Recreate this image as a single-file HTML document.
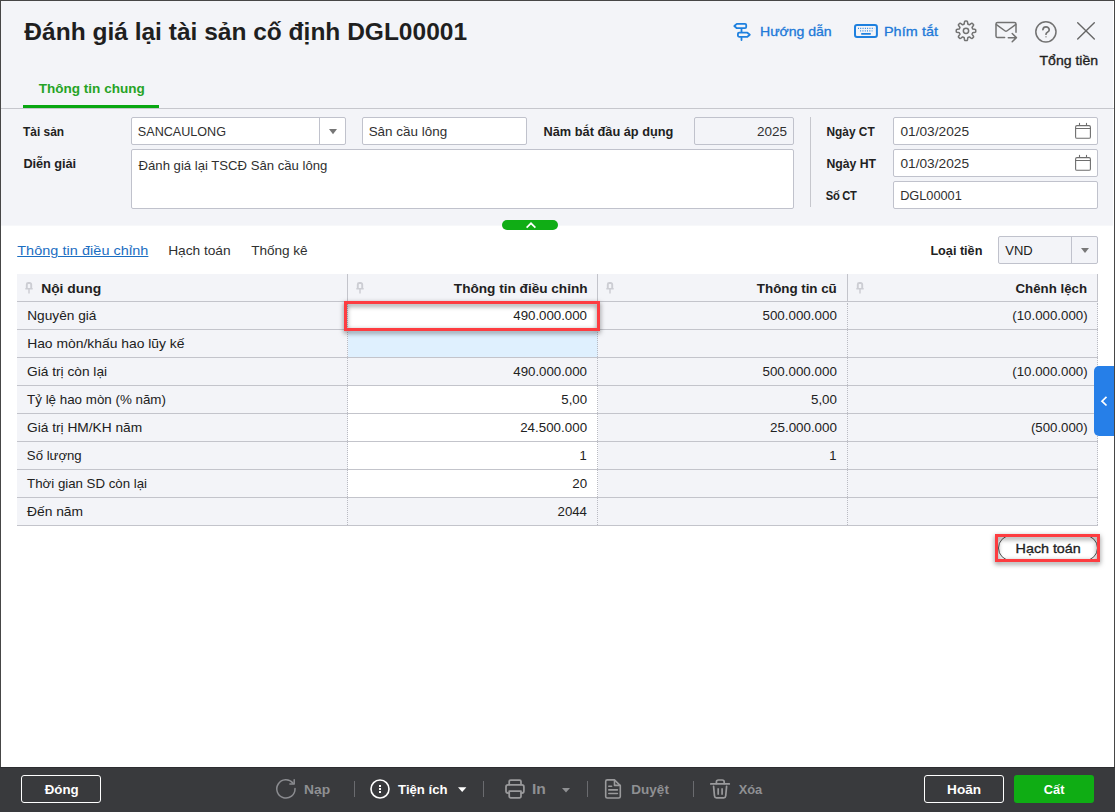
<!DOCTYPE html>
<html><head><meta charset="utf-8"><title>Đánh giá lại tài sản cố định</title>
<style>
*{box-sizing:border-box;margin:0;padding:0}
html,body{width:1115px;height:812px;overflow:hidden}
body{position:relative;background:#fff;font-family:"Liberation Sans",sans-serif;}
.t{position:absolute;transform-origin:0 50%;white-space:nowrap;line-height:1;font-family:"Liberation Sans",sans-serif;}
.a{position:absolute}
.inp{position:absolute;background:#fff;border:1px solid #c0c2cc;border-radius:2px}
.hl{position:absolute;height:1px;background:#c3c4cb;left:17px;width:1081px}
.vd{position:absolute;width:0;border-left:1px dotted #b9bac2}
svg{position:absolute;overflow:visible}
.red{border:3px solid #fd3c40;filter:drop-shadow(0 2.5px 2.5px rgba(0,0,0,.5))}

</style></head>
<body>
<!-- window frame -->
<div class="a" style="left:0;top:0;width:1115px;height:812px;background:#fff"></div>
<!-- gray header/form area -->
<div class="a" style="left:1px;top:1px;width:1112px;height:224px;background:#f3f4f8"></div>
<div class="a" style="left:1px;top:225px;width:1112px;height:1px;background:#f7f8fa"></div>
<div class="a" style="left:0;top:0;width:1115px;height:1px;background:#464646"></div>
<div class="a" style="left:0;top:0;width:1px;height:812px;background:#464646"></div>
<div class="a" style="left:1114px;top:0;width:1px;height:812px;background:#464646"></div>
<!-- tab underline + separator -->
<div class="a" style="left:1px;top:108px;width:1113px;height:1px;background:#c6c7cd"></div>
<div class="a" style="left:23px;top:105px;width:136px;height:3px;background:#09a712"></div>
<!-- form inputs -->
<div class="inp" style="left:131px;top:117px;width:215px;height:28px"></div>
<div class="a" style="left:319px;top:118px;width:1px;height:26px;background:#c0c2cc"></div>
<div class="inp" style="left:362px;top:117px;width:165px;height:28px"></div>
<div class="inp" style="left:694px;top:117px;width:100px;height:28px;background:#f3f4f8"></div>
<div class="inp" style="left:131px;top:149px;width:663px;height:60px"></div>
<div class="a" style="left:810px;top:117px;width:1px;height:90px;background:#c6c7cd"></div>
<div class="inp" style="left:893px;top:117px;width:205px;height:28px"></div>
<div class="inp" style="left:893px;top:149px;width:205px;height:28px"></div>
<div class="inp" style="left:893px;top:181px;width:205px;height:28px"></div>
<!-- green collapse pill -->
<div class="a" style="left:502px;top:220px;width:56px;height:10px;border-radius:5px;background:#10ad15"></div>
<!-- currency select -->
<div class="inp" style="left:998px;top:236px;width:100px;height:28px;background:#f3f4f8"></div>
<div class="a" style="left:1071px;top:237px;width:1px;height:26px;background:#c0c2cc"></div>
<!-- table -->
<div class="a" style="left:17px;top:274px;width:1081px;height:252px;background:#f3f4f8"></div>
<div class="a" style="left:348px;top:329px;width:250px;height:28px;background:#dff0fe"></div>
<div class="a" style="left:348px;top:301px;width:250px;height:28px;background:#fff"></div>
<div class="a" style="left:348px;top:385px;width:250px;height:112px;background:#fff"></div>
<div class="hl" style="top:301px"></div><div class="hl" style="top:329px"></div><div class="hl" style="top:357px"></div><div class="hl" style="top:385px"></div><div class="hl" style="top:413px"></div><div class="hl" style="top:441px"></div><div class="hl" style="top:469px"></div><div class="hl" style="top:497px"></div><div class="hl" style="top:525px"></div>
<div class="a" style="left:347px;top:274px;width:1px;height:27px;background:#c3c4cb"></div>
<div class="a" style="left:597px;top:274px;width:1px;height:27px;background:#c3c4cb"></div>
<div class="a" style="left:847px;top:274px;width:1px;height:27px;background:#c3c4cb"></div>
<div class="a" style="left:1097px;top:274px;width:1px;height:27px;background:#c3c4cb"></div>
<div class="vd" style="left:347px;top:303px;height:222px"></div>
<div class="vd" style="left:597px;top:303px;height:222px"></div>
<div class="vd" style="left:847px;top:303px;height:222px"></div>
<div class="vd" style="left:1097px;top:303px;height:222px"></div>
<!-- Hach toan pill button -->
<div class="a" style="left:998px;top:535px;width:100px;height:26px;border:1px solid #555;border-radius:13px;background:#fff"></div>
<!-- red highlight boxes -->
<div class="a red" style="left:344px;top:301px;width:256px;height:30px"></div>
<div class="a red" style="left:995px;top:534px;width:105px;height:28px"></div>
<!-- right blue tab -->
<div class="a" style="left:1094px;top:366px;width:20px;height:70px;background:#267fe8;border-radius:5px 0 0 5px"></div>
<!-- bottom bar -->
<div class="a" style="left:0;top:767px;width:1115px;height:45px;background:#393a3d"></div>
<div class="a" style="left:0;top:767px;width:1115px;height:1px;background:#2c2d30"></div>
<div class="a" style="left:21px;top:775px;width:80px;height:28px;border:1px solid #fff;border-radius:3px"></div>
<div class="a" style="left:924px;top:775px;width:80px;height:28px;border:1px solid #fff;border-radius:3px"></div>
<div class="a" style="left:1014px;top:775px;width:80px;height:28px;background:#0fad14;border-radius:3px"></div>
<div class="a" style="left:354px;top:781px;width:1px;height:16px;background:#6a6b6f"></div>
<div class="a" style="left:483px;top:781px;width:1px;height:16px;background:#6a6b6f"></div>
<div class="a" style="left:586.5px;top:781px;width:1px;height:16px;background:#6a6b6f"></div>
<div class="a" style="left:692.5px;top:781px;width:1px;height:16px;background:#6a6b6f"></div>
<svg style="left:329px;top:129px" width="8" height="5" viewBox="0 0 8 5"><path d="M0 0h8L4 5.2z" fill="#767676"/></svg>
<svg style="left:1081px;top:248px" width="8" height="5" viewBox="0 0 8 5"><path d="M0 0h8L4 5z" fill="#787878"/></svg>
<svg style="left:0;top:0" width="1115" height="812" viewBox="0 0 1115 812" fill="none" stroke-linecap="round" stroke-linejoin="round">
<g stroke="#1e80df" stroke-width="1.8">
<path d="M736.8 23.9H745a1.2 1.2 0 0 1 1.2 1.2V27a1.2 1.2 0 0 1-1.2 1.2H736.8L734.3 26.05Z"/>
<path d="M739.1 32.7H747.4L749.8 34.75L747.4 36.8H739.1a1.2 1.2 0 0 1-1.2-1.2V33.9a1.2 1.2 0 0 1 1.2-1.2Z"/>
<path d="M741.5 29V32M741.5 37.5V40.1"/>
</g>
<g stroke="#1e80df">
<rect x="855" y="24.9" width="21.9" height="12.1" rx="2" stroke-width="2"/>
<path d="M858 28.3H874.2" stroke-width="1.3" stroke-dasharray="0.9 1.4" stroke-linecap="butt"/>
<path d="M860.2 30.9H872.4" stroke-width="1.3" stroke-dasharray="0.9 1.4" stroke-linecap="butt"/>
<path d="M861.8 33.9H870.2" stroke-width="1.6"/>
</g>
<g stroke="#727272" stroke-width="1.5">
<path d="M975.75 30.85 L975.75 31.02 L975.74 31.19 L975.74 31.36 L975.73 31.53 L975.71 31.70 L975.68 31.87 L975.57 32.03 L975.37 32.17 L975.08 32.29 L974.70 32.38 L974.28 32.46 L973.84 32.52 L973.43 32.57 L973.09 32.62 L972.84 32.68 L972.68 32.77 L972.60 32.87 L972.56 32.98 L972.52 33.10 L972.48 33.21 L972.44 33.32 L972.40 33.43 L972.35 33.55 L972.30 33.66 L972.25 33.77 L972.20 33.87 L972.15 33.98 L972.09 34.09 L972.08 34.22 L972.13 34.39 L972.26 34.61 L972.47 34.89 L972.72 35.21 L972.99 35.56 L973.24 35.92 L973.44 36.25 L973.56 36.55 L973.60 36.79 L973.56 36.98 L973.47 37.12 L973.36 37.25 L973.25 37.37 L973.13 37.50 L973.01 37.62 L972.89 37.74 L972.77 37.86 L972.65 37.98 L972.52 38.10 L972.40 38.21 L972.27 38.32 L972.13 38.41 L971.94 38.45 L971.70 38.41 L971.40 38.29 L971.07 38.09 L970.71 37.84 L970.36 37.57 L970.04 37.32 L969.76 37.11 L969.54 36.98 L969.37 36.93 L969.24 36.94 L969.13 37.00 L969.02 37.05 L968.92 37.10 L968.81 37.15 L968.70 37.20 L968.58 37.25 L968.47 37.29 L968.36 37.33 L968.25 37.37 L968.13 37.41 L968.02 37.45 L967.92 37.53 L967.83 37.69 L967.77 37.94 L967.72 38.28 L967.67 38.69 L967.61 39.13 L967.53 39.55 L967.44 39.93 L967.32 40.22 L967.18 40.42 L967.02 40.53 L966.85 40.56 L966.68 40.58 L966.51 40.59 L966.34 40.59 L966.17 40.60 L966.00 40.60 L965.83 40.60 L965.66 40.59 L965.49 40.59 L965.32 40.58 L965.15 40.56 L964.98 40.53 L964.82 40.42 L964.68 40.22 L964.56 39.93 L964.47 39.55 L964.39 39.13 L964.33 38.69 L964.28 38.28 L964.23 37.94 L964.17 37.69 L964.08 37.53 L963.98 37.45 L963.87 37.41 L963.75 37.37 L963.64 37.33 L963.53 37.29 L963.42 37.25 L963.30 37.20 L963.19 37.15 L963.08 37.10 L962.98 37.05 L962.87 37.00 L962.76 36.94 L962.63 36.93 L962.46 36.98 L962.24 37.11 L961.96 37.32 L961.64 37.57 L961.29 37.84 L960.93 38.09 L960.60 38.29 L960.30 38.41 L960.06 38.45 L959.87 38.41 L959.73 38.32 L959.60 38.21 L959.48 38.10 L959.35 37.98 L959.23 37.86 L959.11 37.74 L958.99 37.62 L958.87 37.50 L958.75 37.37 L958.64 37.25 L958.53 37.12 L958.44 36.98 L958.40 36.79 L958.44 36.55 L958.56 36.25 L958.76 35.92 L959.01 35.56 L959.28 35.21 L959.53 34.89 L959.74 34.61 L959.87 34.39 L959.92 34.22 L959.91 34.09 L959.85 33.98 L959.80 33.87 L959.75 33.77 L959.70 33.66 L959.65 33.55 L959.60 33.43 L959.56 33.32 L959.52 33.21 L959.48 33.10 L959.44 32.98 L959.40 32.87 L959.32 32.77 L959.16 32.68 L958.91 32.62 L958.57 32.57 L958.16 32.52 L957.72 32.46 L957.30 32.38 L956.92 32.29 L956.63 32.17 L956.43 32.03 L956.32 31.87 L956.29 31.70 L956.27 31.53 L956.26 31.36 L956.26 31.19 L956.25 31.02 L956.25 30.85 L956.25 30.68 L956.26 30.51 L956.26 30.34 L956.27 30.17 L956.29 30.00 L956.32 29.83 L956.43 29.67 L956.63 29.53 L956.92 29.41 L957.30 29.32 L957.72 29.24 L958.16 29.18 L958.57 29.13 L958.91 29.08 L959.16 29.02 L959.32 28.93 L959.40 28.83 L959.44 28.72 L959.48 28.60 L959.52 28.49 L959.56 28.38 L959.60 28.27 L959.65 28.15 L959.70 28.04 L959.75 27.93 L959.80 27.83 L959.85 27.72 L959.91 27.61 L959.92 27.48 L959.87 27.31 L959.74 27.09 L959.53 26.81 L959.28 26.49 L959.01 26.14 L958.76 25.78 L958.56 25.45 L958.44 25.15 L958.40 24.91 L958.44 24.72 L958.53 24.58 L958.64 24.45 L958.75 24.33 L958.87 24.20 L958.99 24.08 L959.11 23.96 L959.23 23.84 L959.35 23.72 L959.48 23.60 L959.60 23.49 L959.73 23.38 L959.87 23.29 L960.06 23.25 L960.30 23.29 L960.60 23.41 L960.93 23.61 L961.29 23.86 L961.64 24.13 L961.96 24.38 L962.24 24.59 L962.46 24.72 L962.63 24.77 L962.76 24.76 L962.87 24.70 L962.98 24.65 L963.08 24.60 L963.19 24.55 L963.30 24.50 L963.42 24.45 L963.53 24.41 L963.64 24.37 L963.75 24.33 L963.87 24.29 L963.98 24.25 L964.08 24.17 L964.17 24.01 L964.23 23.76 L964.28 23.42 L964.33 23.01 L964.39 22.57 L964.47 22.15 L964.56 21.77 L964.68 21.48 L964.82 21.28 L964.98 21.17 L965.15 21.14 L965.32 21.12 L965.49 21.11 L965.66 21.11 L965.83 21.10 L966.00 21.10 L966.17 21.10 L966.34 21.11 L966.51 21.11 L966.68 21.12 L966.85 21.14 L967.02 21.17 L967.18 21.28 L967.32 21.48 L967.44 21.77 L967.53 22.15 L967.61 22.57 L967.67 23.01 L967.72 23.42 L967.77 23.76 L967.83 24.01 L967.92 24.17 L968.02 24.25 L968.13 24.29 L968.25 24.33 L968.36 24.37 L968.47 24.41 L968.58 24.45 L968.70 24.50 L968.81 24.55 L968.92 24.60 L969.02 24.65 L969.13 24.70 L969.24 24.76 L969.37 24.77 L969.54 24.72 L969.76 24.59 L970.04 24.38 L970.36 24.13 L970.71 23.86 L971.07 23.61 L971.40 23.41 L971.70 23.29 L971.94 23.25 L972.13 23.29 L972.27 23.38 L972.40 23.49 L972.52 23.60 L972.65 23.72 L972.77 23.84 L972.89 23.96 L973.01 24.08 L973.13 24.20 L973.25 24.33 L973.36 24.45 L973.47 24.58 L973.56 24.72 L973.60 24.91 L973.56 25.15 L973.44 25.45 L973.24 25.78 L972.99 26.14 L972.72 26.49 L972.47 26.81 L972.26 27.09 L972.13 27.31 L972.08 27.48 L972.09 27.61 L972.15 27.72 L972.20 27.83 L972.25 27.93 L972.30 28.04 L972.35 28.15 L972.40 28.27 L972.44 28.38 L972.48 28.49 L972.52 28.60 L972.56 28.72 L972.60 28.83 L972.68 28.93 L972.84 29.02 L973.09 29.08 L973.43 29.13 L973.84 29.18 L974.28 29.24 L974.70 29.32 L975.08 29.41 L975.37 29.53 L975.57 29.67 L975.68 29.83 L975.71 30.00 L975.73 30.17 L975.74 30.34 L975.74 30.51 L975.75 30.68Z"/>
<circle cx="966" cy="30.85" r="2.65"/>
</g>
<g stroke="#727272" stroke-width="1.5">
<path d="M1004.6 37.55H997.6a1.6 1.6 0 0 1-1.6-1.6V24.1a1.6 1.6 0 0 1 1.6-1.6H1014.4a1.6 1.6 0 0 1 1.6 1.6V32.2"/>
<path d="M996.4 24.6L1005.2 31a1.4 1.4 0 0 0 1.6 0L1015.6 24.6"/>
<path d="M1008.3 37.65H1016.3M1012.2 33.5L1016.4 37.65L1012.2 41.8"/>
</g>
<g stroke="#727272" stroke-width="1.5">
<circle cx="1045.9" cy="31.8" r="10.1"/>
<path d="M1042.9 29.6a3.1 3.1 0 0 1 3.1-2.7a3.1 3.1 0 0 1 3.2 3c0 2.2-3.2 2.3-3.2 4.3" stroke-width="1.7"/>
<path d="M1046 36.5V37.3" stroke-width="1.7" stroke-linecap="butt"/>
</g>
<path d="M1077.7 22.8L1094.3 39M1094.3 22.8L1077.7 39" stroke="#666" stroke-width="1.4"/>
<g stroke="#6e6e6e" stroke-width="1.1"><rect x="1075.6" y="125.6" width="14.8" height="12.7" rx="1.4"/><path d="M1075.6 128.5H1090.4M1079.5 123.3V125.5M1086.5 123.3V125.5"/></g>
<g stroke="#6e6e6e" stroke-width="1.1"><rect x="1075.6" y="157.6" width="14.8" height="12.7" rx="1.4"/><path d="M1075.6 160.5H1090.4M1079.5 155.3V157.5M1086.5 155.3V157.5"/></g>
<g transform="translate(24.85 0)" stroke="#cccdd3" stroke-linecap="butt"><path d="M1.95 288.6V284.5a1.5 1.5 0 0 1 1.5-1.5h1.4a1.5 1.5 0 0 1 1.5 1.5V288.6" stroke-width="1.9"/><path d="M0.5 288.7H7.8M4.15 289V293.6" stroke-width="1.45"/></g>
<g transform="translate(355.85 0)" stroke="#cccdd3" stroke-linecap="butt"><path d="M1.95 288.6V284.5a1.5 1.5 0 0 1 1.5-1.5h1.4a1.5 1.5 0 0 1 1.5 1.5V288.6" stroke-width="1.9"/><path d="M0.5 288.7H7.8M4.15 289V293.6" stroke-width="1.45"/></g>
<g transform="translate(605.85 0)" stroke="#cccdd3" stroke-linecap="butt"><path d="M1.95 288.6V284.5a1.5 1.5 0 0 1 1.5-1.5h1.4a1.5 1.5 0 0 1 1.5 1.5V288.6" stroke-width="1.9"/><path d="M0.5 288.7H7.8M4.15 289V293.6" stroke-width="1.45"/></g>
<g transform="translate(855.85 0)" stroke="#cccdd3" stroke-linecap="butt"><path d="M1.95 288.6V284.5a1.5 1.5 0 0 1 1.5-1.5h1.4a1.5 1.5 0 0 1 1.5 1.5V288.6" stroke-width="1.9"/><path d="M0.5 288.7H7.8M4.15 289V293.6" stroke-width="1.45"/></g>
<g stroke="#8b8c90" stroke-width="1.5"><path d="M295 788.6A9.1 9.1 0 1 1 292.9 783.1"/><path d="M294.2 779.7V784H289.9"/></g>
<circle cx="380" cy="789" r="9" stroke="#fff" stroke-width="1.6"/>
<path d="M379 785h2v2h-2zM379 788h2v2h-2zM379 791h2v2h-2z" fill="#fff" stroke="none"/>
<path d="M458 787.2h8.4l-4.2 4.8z" fill="#fff" stroke="none"/>
<path d="M562 788h8l-4 4.5z" fill="#8f9093" stroke="none"/>
<g stroke="#9a9a9c" stroke-width="1.75">
<path d="M509.2 784.5V781.5a1.5 1.5 0 0 1 1.5-1.5H519.5a1.5 1.5 0 0 1 1.5 1.5V784.5"/>
<path d="M509 793H508a2 2 0 0 1-2-2V786.9a2 2 0 0 1 2-2H521.9a2 2 0 0 1 2 2V791a2 2 0 0 1-2 2H521.2"/>
<path d="M509.2 791.2H521V796.3a1.5 1.5 0 0 1-1.5 1.5H510.7a1.5 1.5 0 0 1-1.5-1.5Z"/>
</g>
<g stroke="#9a9a9c" stroke-width="1.6">
<path d="M607.3 779.9H614.4L620.3 785.6V796.4a1.6 1.6 0 0 1-1.6 1.6H607.3a1.6 1.6 0 0 1-1.6-1.6V781.5a1.6 1.6 0 0 1 1.6-1.6Z"/>
<path d="M614.5 780.2V785.4H620"/>
<path d="M608.8 786.2H611.6M608.8 789.9H617.4M608.8 793.5H617.4"/>
</g>
<g stroke="#9a9a9c" stroke-width="1.7">
<path d="M710.8 783.9H729.3"/>
<path d="M716.4 783.5V782a2 2 0 0 1 2-2H722.2a2 2 0 0 1 2 2V783.5"/>
<path d="M713.6 786.3L714.5 796a2 2 0 0 0 2 1.8H723.7a2 2 0 0 0 2-1.8L726.6 786.3"/>
<path d="M718.2 788.2V794.8M722.1 788.2V794.8" stroke-linecap="butt"/>
</g>
<path d="M526.6 227.6L531 223.3L535.4 227.6" stroke="#fff" stroke-width="1.7" stroke-linecap="butt" stroke-linejoin="miter"/>
<path d="M1106.5 396.9L1102 401.2L1106.5 405.5" stroke="#fff" stroke-width="1.7" stroke-linecap="butt" stroke-linejoin="miter"/>
</svg>
<span class="t" id="t0" style="left:24.37px;top:21.00px;font-size:23.6px;font-weight:700;color:#1f1f1f;letter-spacing:-0.001px;left:0;transform:translateX(24.37px) scaleX(1.0389);">Đánh giá lại tài sản cố định DGL00001</span>
<span class="t" id="t1" style="left:760.01px;top:25.00px;font-size:13px;font-weight:400;color:#2179d8;letter-spacing:-0.030px;-webkit-text-stroke:0.3px #2179d8;left:0;transform:translateX(760.01px) scaleX(1.0839);">Hướng dẫn</span>
<span class="t" id="t2" style="left:883.89px;top:25.00px;font-size:13px;font-weight:400;color:#2179d8;letter-spacing:0.074px;-webkit-text-stroke:0.3px #2179d8;left:0;transform:translateX(883.89px) scaleX(1.1071);">Phím tắt</span>
<span class="t" id="t3" style="left:1039.53px;top:54.00px;font-size:13px;font-weight:400;color:#1f1f1f;letter-spacing:0.003px;-webkit-text-stroke:0.33px #1f1f1f;left:0;transform:translateX(1039.53px) scaleX(1.0797);">Tổng tiền</span>
<span class="t" id="t4" style="left:38.64px;top:82.00px;font-size:13px;font-weight:700;color:#25a325;letter-spacing:0.010px;left:0;transform:translateX(38.64px) scaleX(1.0411);">Thông tin chung</span>
<span class="t" id="t5" style="left:23.10px;top:126.00px;font-size:12px;font-weight:700;color:#212121;letter-spacing:0.000px;left:0;transform:translateX(23.10px) scaleX(0.9915);">Tài sản</span>
<span class="t" id="t6" style="left:23.38px;top:158.00px;font-size:12px;font-weight:700;color:#212121;letter-spacing:-0.053px;left:0;transform:translateX(23.38px) scaleX(1.0601);">Diễn giải</span>
<span class="t" id="t7" style="left:137.83px;top:125.00px;font-size:13px;font-weight:400;color:#303030;letter-spacing:0.000px;left:0;transform:translateX(137.83px) scaleX(0.9686);">SANCAULONG</span>
<span class="t" id="t8" style="left:138.58px;top:159.00px;font-size:13px;font-weight:400;color:#303030;letter-spacing:0.004px;left:0;transform:translateX(138.58px) scaleX(1.0093);">Đánh giá lại TSCĐ Sân cầu lông</span>
<span class="t" id="t9" style="left:368.65px;top:125.00px;font-size:13px;font-weight:400;color:#303030;letter-spacing:0.010px;left:0;transform:translateX(368.65px) scaleX(1.0327);">Sân cầu lông</span>
<span class="t" id="t10" style="left:543.55px;top:126.00px;font-size:12px;font-weight:700;color:#212121;letter-spacing:0.013px;left:0;transform:translateX(543.55px) scaleX(1.0622);">Năm bắt đầu áp dụng</span>
<span class="t" id="t11" style="left:757.09px;top:125.00px;font-size:13px;font-weight:400;color:#303030;letter-spacing:-0.013px;left:0;transform:translateX(757.09px) scaleX(1.0381);">2025</span>
<span class="t" id="t12" style="left:826.52px;top:126.00px;font-size:12px;font-weight:700;color:#212121;letter-spacing:-0.012px;left:0;transform:translateX(826.52px) scaleX(0.9903);">Ngày CT</span>
<span class="t" id="t13" style="left:826.49px;top:158.00px;font-size:12px;font-weight:700;color:#212121;letter-spacing:-0.020px;left:0;transform:translateX(826.49px) scaleX(1.0196);">Ngày HT</span>
<span class="t" id="t14" style="left:825.72px;top:190.00px;font-size:12px;font-weight:700;color:#212121;letter-spacing:-0.280px;left:0;transform:translateX(825.72px) scaleX(0.9300);">Số CT</span>
<span class="t" id="t15" style="left:900.39px;top:125.00px;font-size:13px;font-weight:400;color:#303030;letter-spacing:0.013px;left:0;transform:translateX(900.39px) scaleX(1.0526);">01/03/2025</span>
<span class="t" id="t16" style="left:900.39px;top:157.00px;font-size:13px;font-weight:400;color:#303030;letter-spacing:0.013px;left:0;transform:translateX(900.39px) scaleX(1.0526);">01/03/2025</span>
<span class="t" id="t17" style="left:900.13px;top:189.00px;font-size:13px;font-weight:400;color:#303030;letter-spacing:-0.017px;left:0;transform:translateX(900.13px) scaleX(0.9826);">DGL00001</span>
<span class="t" id="t18" style="left:17.22px;top:245.00px;font-size:12.9px;font-weight:400;color:#1b6ec2;letter-spacing:0.050px;text-decoration:underline;text-underline-offset:1px;text-decoration-thickness:1px;left:0;transform:translateX(17.22px) scaleX(1.1200);">Thông tin điều chỉnh</span>
<span class="t" id="t19" style="left:168.14px;top:245.00px;font-size:12.9px;font-weight:400;color:#303030;letter-spacing:-0.029px;left:0;transform:translateX(168.14px) scaleX(1.0674);">Hạch toán</span>
<span class="t" id="t20" style="left:251.13px;top:245.00px;font-size:12.9px;font-weight:400;color:#303030;letter-spacing:-0.029px;left:0;transform:translateX(251.13px) scaleX(1.0556);">Thống kê</span>
<span class="t" id="t21" style="left:930.39px;top:245.00px;font-size:12px;font-weight:700;color:#212121;letter-spacing:-0.020px;left:0;transform:translateX(930.39px) scaleX(1.0571);">Loại tiền</span>
<span class="t" id="t22" style="left:1005.18px;top:244.00px;font-size:13px;font-weight:400;color:#212121;letter-spacing:0.039px;">VND</span>
<span class="t" id="t23" style="left:41.13px;top:282.00px;font-size:13px;font-weight:700;color:#212121;letter-spacing:-0.007px;left:0;transform:translateX(41.13px) scaleX(1.0668);">Nội dung</span>
<span class="t" id="t24" style="left:453.87px;top:282.00px;font-size:13px;font-weight:700;color:#212121;letter-spacing:-0.007px;left:0;transform:translateX(453.87px) scaleX(1.0472);">Thông tin điều chỉnh</span>
<span class="t" id="t25" style="left:756.87px;top:282.00px;font-size:13px;font-weight:700;color:#212121;letter-spacing:-0.035px;left:0;transform:translateX(756.87px) scaleX(1.0289);">Thông tin cũ</span>
<span class="t" id="t26" style="left:1015.50px;top:282.00px;font-size:13px;font-weight:700;color:#212121;letter-spacing:0.032px;left:0;transform:translateX(1015.50px) scaleX(1.0172);">Chênh lệch</span>
<span class="t" id="t27" style="left:27.13px;top:309.00px;font-size:13px;font-weight:400;color:#212121;letter-spacing:0.013px;left:0;transform:translateX(27.13px) scaleX(1.0525);">Nguyên giá</span>
<span class="t" id="t28" style="left:27.13px;top:337.00px;font-size:13px;font-weight:400;color:#212121;letter-spacing:-0.002px;left:0;transform:translateX(27.13px) scaleX(1.0677);">Hao mòn/khấu hao lũy kế</span>
<span class="t" id="t29" style="left:27.05px;top:365.00px;font-size:13px;font-weight:400;color:#212121;letter-spacing:-0.002px;left:0;transform:translateX(27.05px) scaleX(1.0551);">Giá trị còn lại</span>
<span class="t" id="t30" style="left:27.11px;top:393.00px;font-size:13px;font-weight:400;color:#212121;letter-spacing:-0.005px;left:0;transform:translateX(27.11px) scaleX(1.0282);">Tỷ lệ hao mòn (% năm)</span>
<span class="t" id="t31" style="left:27.05px;top:421.00px;font-size:13px;font-weight:400;color:#212121;letter-spacing:-0.005px;left:0;transform:translateX(27.05px) scaleX(1.0563);">Giá trị HM/KH năm</span>
<span class="t" id="t32" style="left:26.85px;top:449.00px;font-size:13px;font-weight:400;color:#212121;letter-spacing:0.002px;left:0;transform:translateX(26.85px) scaleX(1.0135);">Số lượng</span>
<span class="t" id="t33" style="left:27.11px;top:477.00px;font-size:13px;font-weight:400;color:#212121;letter-spacing:-0.006px;left:0;transform:translateX(27.11px) scaleX(1.0202);">Thời gian SD còn lại</span>
<span class="t" id="t34" style="left:26.98px;top:505.00px;font-size:13px;font-weight:400;color:#212121;letter-spacing:-0.012px;left:0;transform:translateX(26.98px) scaleX(1.0635);">Đến năm</span>
<span class="t" id="t35" style="left:513.27px;top:309.00px;font-size:13px;font-weight:400;color:#212121;letter-spacing:-0.038px;left:0;transform:translateX(513.27px) scaleX(1.0248);">490.000.000</span>
<span class="t" id="t36" style="left:513.27px;top:365.00px;font-size:13px;font-weight:400;color:#212121;letter-spacing:-0.038px;left:0;transform:translateX(513.27px) scaleX(1.0248);">490.000.000</span>
<span class="t" id="t37" style="left:561.24px;top:393.00px;font-size:13px;font-weight:400;color:#212121;letter-spacing:0.040px;left:0;transform:translateX(561.24px) scaleX(1.0185);">5,00</span>
<span class="t" id="t38" style="left:520.17px;top:421.00px;font-size:13px;font-weight:400;color:#212121;letter-spacing:0.027px;left:0;transform:translateX(520.17px) scaleX(1.0238);">24.500.000</span>
<span class="t" id="t39" style="left:579.46px;top:449.00px;font-size:13px;font-weight:400;color:#212121;letter-spacing:0.000px;">1</span>
<span class="t" id="t40" style="left:572.15px;top:477.00px;font-size:13px;font-weight:400;color:#212121;letter-spacing:0.130px;left:0;transform:translateX(572.15px) scaleX(1.0257);">20</span>
<span class="t" id="t41" style="left:557.61px;top:505.00px;font-size:13px;font-weight:400;color:#212121;letter-spacing:-0.047px;left:0;transform:translateX(557.61px) scaleX(1.0194);">2044</span>
<span class="t" id="t42" style="left:762.45px;top:309.00px;font-size:13px;font-weight:400;color:#212121;letter-spacing:-0.000px;left:0;transform:translateX(762.45px) scaleX(1.0290);">500.000.000</span>
<span class="t" id="t43" style="left:762.45px;top:365.00px;font-size:13px;font-weight:400;color:#212121;letter-spacing:-0.000px;left:0;transform:translateX(762.45px) scaleX(1.0290);">500.000.000</span>
<span class="t" id="t44" style="left:811.05px;top:393.00px;font-size:13px;font-weight:400;color:#212121;letter-spacing:-0.048px;left:0;transform:translateX(811.05px) scaleX(1.0263);">5,00</span>
<span class="t" id="t45" style="left:770.11px;top:421.00px;font-size:13px;font-weight:400;color:#212121;letter-spacing:-0.035px;left:0;transform:translateX(770.11px) scaleX(1.0320);">25.000.000</span>
<span class="t" id="t46" style="left:829.27px;top:449.00px;font-size:13px;font-weight:400;color:#212121;letter-spacing:0.000px;">1</span>
<span class="t" id="t47" style="left:1012.29px;top:309.00px;font-size:13px;font-weight:400;color:#212121;letter-spacing:0.009px;left:0;transform:translateX(1012.29px) scaleX(1.0205);">(10.000.000)</span>
<span class="t" id="t48" style="left:1012.29px;top:365.00px;font-size:13px;font-weight:400;color:#212121;letter-spacing:0.009px;left:0;transform:translateX(1012.29px) scaleX(1.0205);">(10.000.000)</span>
<span class="t" id="t49" style="left:1030.92px;top:421.00px;font-size:13px;font-weight:400;color:#212121;letter-spacing:-0.001px;left:0;transform:translateX(1030.92px) scaleX(1.0181);">(500.000)</span>
<span class="t" id="t50" style="left:1015.60px;top:542.00px;font-size:13.2px;font-weight:400;color:#1f1f1f;letter-spacing:-0.038px;-webkit-text-stroke:0.33px #1f1f1f;left:0;transform:translateX(1015.60px) scaleX(1.0893);">Hạch toán</span>
<span class="t" id="t51" style="left:44.70px;top:783.00px;font-size:13.6px;font-weight:700;color:#fff;letter-spacing:0.007px;left:0;transform:translateX(44.70px) scaleX(0.9765);">Đóng</span>
<span class="t" id="t52" style="left:303.96px;top:783.00px;font-size:13.6px;font-weight:700;color:#8f9093;letter-spacing:0.013px;left:0;transform:translateX(303.96px) scaleX(1.0159);">Nạp</span>
<span class="t" id="t53" style="left:398.08px;top:783.00px;font-size:13.6px;font-weight:700;color:#fff;letter-spacing:-0.002px;left:0;transform:translateX(398.08px) scaleX(0.9686);">Tiện ích</span>
<span class="t" id="t54" style="left:531.92px;top:783.00px;font-size:13.8px;font-weight:700;color:#8f9093;letter-spacing:0.085px;left:0;transform:translateX(531.92px) scaleX(1.1297);">In</span>
<span class="t" id="t55" style="left:631.26px;top:783.00px;font-size:13.6px;font-weight:700;color:#8f9093;letter-spacing:0.019px;left:0;transform:translateX(631.26px) scaleX(0.9940);">Duyệt</span>
<span class="t" id="t56" style="left:738.76px;top:783.00px;font-size:13.6px;font-weight:700;color:#8f9093;letter-spacing:-0.060px;left:0;transform:translateX(738.76px) scaleX(0.9449);">Xóa</span>
<span class="t" id="t57" style="left:947.07px;top:783.00px;font-size:13.6px;font-weight:700;color:#fff;letter-spacing:0.040px;">Hoãn</span>
<span class="t" id="t58" style="left:1043.87px;top:783.00px;font-size:13.6px;font-weight:700;color:#fff;letter-spacing:0.028px;left:0;transform:translateX(1043.87px) scaleX(0.9385);">Cất</span>
</body></html>
